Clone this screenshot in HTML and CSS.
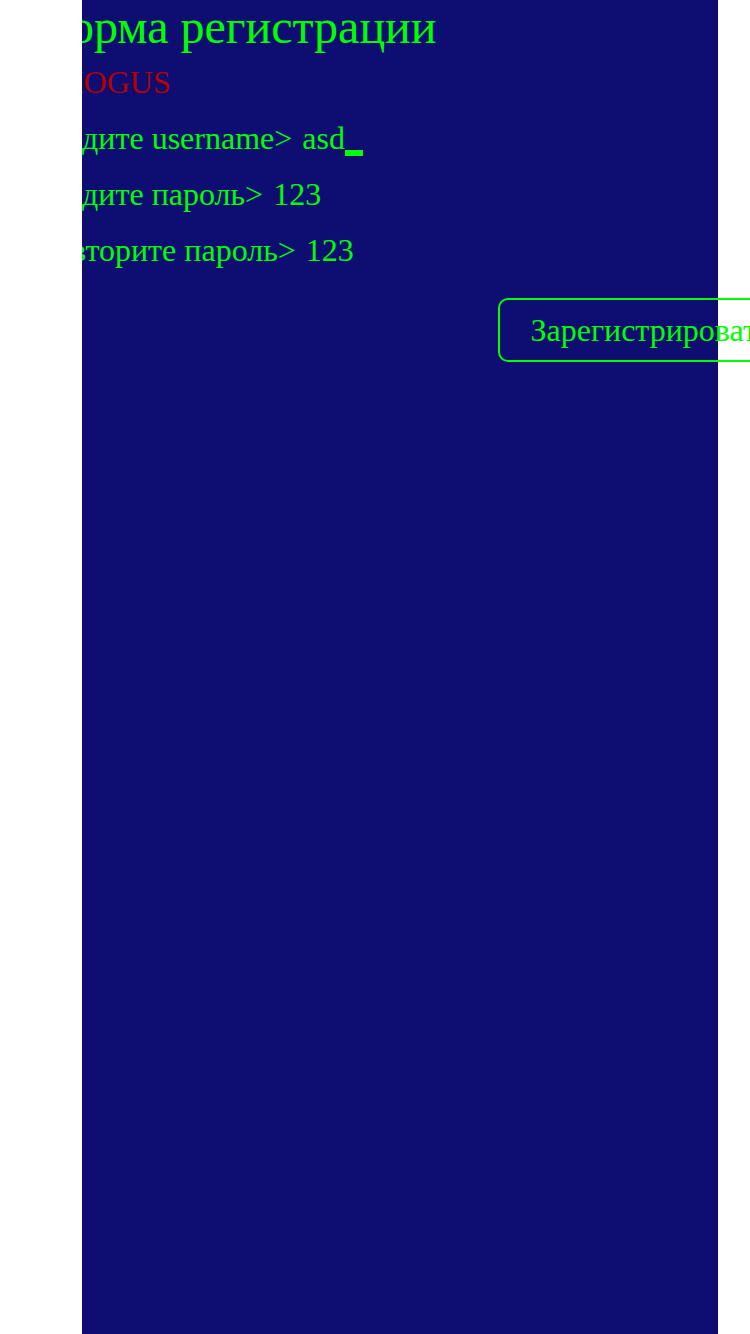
FILE: index.html
```html
<!DOCTYPE html>
<html lang="ru">
<head>
<meta charset="utf-8">
<title>Форма регистрации</title>
<link rel="stylesheet" href="styles.css">
</head>
<body>
<main class="terminal">
  <h1 class="title">Форма регистрации</h1>
  <p class="brand">AMOGUS</p>
  <form class="form">
    <div class="row">
      <label for="username">Введите username&gt;</label>
      <input class="field field-name" id="username" type="text" size="3" value="asd">
      <span class="cursor"></span>
    </div>
    <div class="row">
      <label for="password">Введите пароль&gt;</label>
      <input class="field" id="password" type="text" size="3" value="123">
    </div>
    <div class="row">
      <label for="repeat">Повторите пароль&gt;</label>
      <input class="field" id="repeat" type="text" size="3" value="123">
    </div>
    <button class="submit" type="button">Зарегистрироваться</button>
  </form>
</main>
</body>
</html>
```

FILE: styles.css
```css
* {
  box-sizing: border-box;
}

html {
  overflow: hidden;
  background: #ffffff;
}

body {
  margin: 0;
  font: 32px/36px "Liberation Serif", "Times New Roman", serif;
  color: #00ff00;
}

.terminal {
  min-height: 100vh;
  margin: 0 32px;
  background: #0e0d72;
  clip-path: inset(0 -160px 0 50px);
}

.title {
  margin: 0;
  font-size: 48px;
  font-weight: 400;
  line-height: 54px;
}

.brand {
  margin: 10px 0 20px;
  color: #b30000;
}

.form {
  display: flex;
  flex-direction: column;
  gap: 20px;
}

.row {
  display: flex;
  align-items: center;
  white-space: nowrap;
}

.field {
  field-sizing: content;
  height: 36px;
  margin: 0 0 0 10px;
  padding: 0;
  border: 0;
  outline: 0;
  background: transparent;
  color: inherit;
  font: inherit;
}

.cursor {
  align-self: flex-end;
  width: 18px;
  height: 6px;
  background: #00ff00;
}

.submit {
  align-self: flex-start;
  height: 64px;
  margin: 10px 0 0 68%;
  padding: 0 30px;
  border: 2px solid #00ff00;
  border-radius: 10px;
  background: transparent;
  color: inherit;
  font: inherit;
  white-space: nowrap;
}
```
